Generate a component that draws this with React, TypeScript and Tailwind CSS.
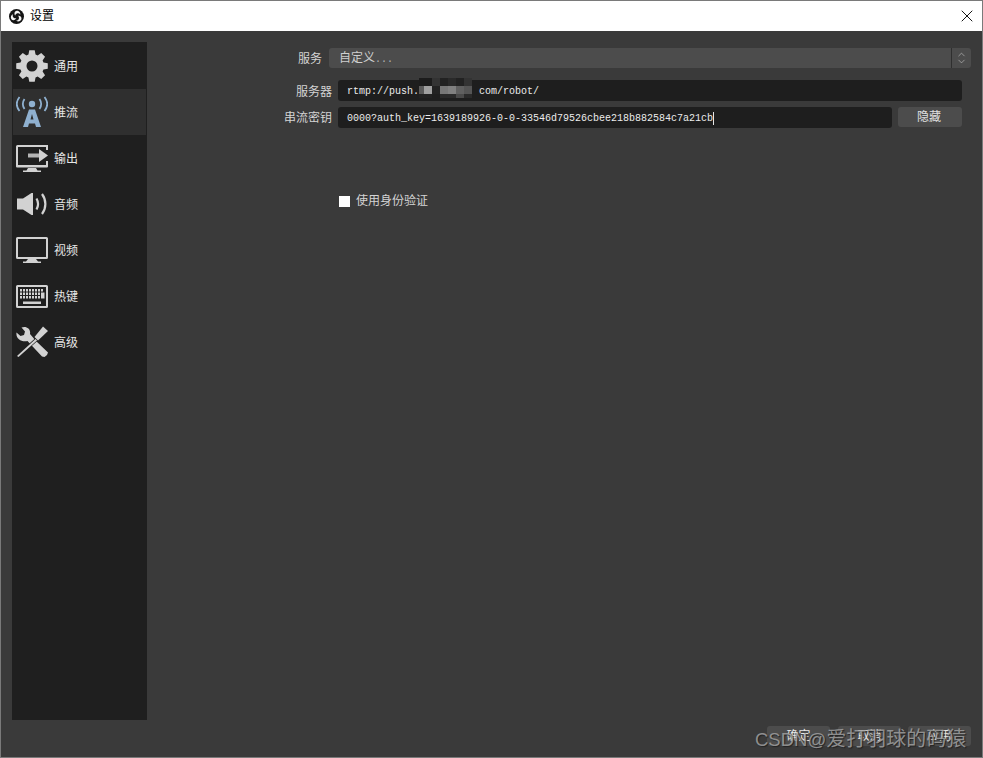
import { ReactNode } from 'react'
import { ChevronDown, ChevronUp, X } from 'lucide-react'

const cjk = "font-['Liberation_Sans','Noto_Sans_CJK_SC',sans-serif]"
const mono = "font-['Liberation_Mono','Noto_Sans_CJK_SC',monospace]"

const ICON = '#d2d2d2'
const STREAM = '#8fb0cf'

// eight teeth, walked round the wheel
const gearPath = () => {
  const pts: string[] = []
  for (let i = 0; i < 8; i++) {
    const a = (i * Math.PI) / 4
    const at = (r: number, d: number) => {
      const t = a + d - Math.PI / 2
      return `${(16 + r * Math.cos(t)).toFixed(2)} ${(16 + r * Math.sin(t)).toFixed(2)}`
    }
    pts.push(at(12, -0.3), at(16, -0.17), at(16, 0.17), at(12, 0.3))
  }
  return `M${pts.join('L')}ZM16 10.500a5.500 5.500 0 1 0 0 11 5.500 5.500 0 0 0 0-11z`
}

const GearIcon = () => (
  <svg width="32" height="32" viewBox="0 0 32 32">
    <path fill={ICON} fillRule="evenodd" d={gearPath()} />
  </svg>
)

const AntennaIcon = () => (
  <svg width="32" height="32" viewBox="0 0 32 32" fill="none" stroke={STREAM}>
    <circle cx="16" cy="8" r="3.200" fill={STREAM} stroke="none" />
    <path strokeWidth="1.800" d="M8.500 3C6.500 6 6.500 10 8.500 13M23.500 3C25.500 6 25.500 10 23.500 13" />
    <path strokeWidth="1.800" d="M3.500 1C0 5.500 0 10.500 3.500 15M28.500 1C32 5.500 32 10.500 28.500 15" />
    <path
      fill={STREAM}
      stroke="none"
      fillRule="evenodd"
      d="M13 13.500h6L25 31h-5l-1-3.500h-6L12 31H7zM14.500 23.500h3L16 18z"
    />
  </svg>
)

const OutputIcon = () => (
  <svg width="32" height="27" viewBox="0 0 32 27">
    <path
      fill={ICON}
      d="M1.500 0H32v5h-2V2H2v18h28v-4h2v5.500a1 1 0 0 1-1 1H1a1 1 0 0 1-1-1V1.500A1.500 1.500 0 0 1 1.500 0zM12 23h8l1.500 2.500H25V27H7v-1.500h3.500z"
    />
    <path fill="#b4b4b4" d="M12 8.500h11v4H12z" />
    <path fill={ICON} d="M23 4l9 6.500-9 6.500z" />
  </svg>
)

const AudioIcon = () => (
  <svg width="32" height="22" viewBox="0 0 32 22" fill="none" stroke={ICON}>
    <path fill={ICON} stroke="none" d="M1 5.500h6L15.500 0H17v22h-1.500L7 16.500H1z" />
    <path strokeWidth="2.200" d="M20.500 5.500c2 3.500 2 7.500 0 11" />
    <path strokeWidth="2.200" d="M26 1c4.500 6 4.500 14 0 20" />
  </svg>
)

const MonitorIcon = () => (
  <svg width="32" height="26" viewBox="0 0 32 26">
    <path
      fill={ICON}
      fillRule="evenodd"
      d="M1.500 0h29A1.500 1.500 0 0 1 32 1.500v19a1.500 1.500 0 0 1-1.500 1.500h-29A1.500 1.500 0 0 1 0 20.500v-19A1.500 1.500 0 0 1 1.500 0zM2 2v18h28V2zM12 22h8l2 2.500h3V26H7v-1.500h3z"
    />
  </svg>
)

const KeyboardIcon = () => {
  const rows = [
    [4, 7, 10, 13, 16, 19, 22, 25],
    [4, 7, 10, 13, 16, 19, 22],
    [4, 7, 10, 13, 16, 19, 22],
  ]
  return (
    <svg width="32" height="23" viewBox="0 0 32 23">
      <path
        fill={ICON}
        fillRule="evenodd"
        d="M1.500 0h29A1.500 1.500 0 0 1 32 1.500v20a1.500 1.500 0 0 1-1.500 1.500h-29A1.500 1.500 0 0 1 0 21.500v-20A1.500 1.500 0 0 1 1.500 0zM2 2v19h28V2z"
      />
      {rows.map((row, i) =>
        row.map((x) => (
          <rect key={`${i}-${x}`} x={x} y={4 + i * 3.500} width="2" height="2.500" fill={ICON} />
        ))
      )}
      <rect x="25" y="7.500" width="3.500" height="6" fill={ICON} />
      <rect x="7" y="16.500" width="18" height="2.500" fill={ICON} />
    </svg>
  )
}

const ToolsIcon = () => (
  <svg width="32" height="32" viewBox="0 0 32 32">
    <path
      fill={ICON}
      d="M0.500 6.500L4.500 10 8 9l1-3.500L5.500 1.500C10 -.5 15 2.500 14 8l6 7 12 11.500-1 2.500-2.500 2-2.500-.5L11.500 15C6 16.500 -.5 13 .5 6.500z"
    />
    <path fill="none" stroke="#1f1f1f" strokeWidth="3.500" d="M21 13L1 31" />
    <path fill={ICON} d="M27 0.500L32 5 22 14.500 18.500 11z" />
    <path fill={ICON} d="M19.500 13l1.500 1.500L2.500 31 1 30z" />
  </svg>
)

const OBSLogo = () => (
  <svg width="15" height="15" viewBox="0 0 30 30">
    <circle cx="15" cy="15" r="15" fill="#141414" />
    {[0, 120, 240].map((deg) => (
      <path
        key={deg}
        transform={`rotate(${deg} 15 15)`}
        fill="#f4f4f4"
        d="M15.500 3.500C20 3.500 23.500 7 22.500 11.500 21 8.800 18 8 15.500 9c-2 1-3 2.800-3 4.200C10 10 10.500 4.500 15.500 3.500z"
      />
    ))}
  </svg>
)

const navItems: { label: string; icon: ReactNode; active?: boolean }[] = [
  { label: '通用', icon: <GearIcon /> },
  { label: '推流', icon: <AntennaIcon />, active: true },
  { label: '输出', icon: <OutputIcon /> },
  { label: '音频', icon: <AudioIcon /> },
  { label: '视频', icon: <MonitorIcon /> },
  { label: '热键', icon: <KeyboardIcon /> },
  { label: '高级', icon: <ToolsIcon /> },
]

const FooterButton = ({ label, className }: { label: string; className: string }) => (
  <button className={`h-5 w-[63px] rounded-[3px] bg-[#4c4c4c] text-xs text-[#e8e8e8] ${className}`}>
    {label}
  </button>
)

// the pixelated patch that hides the host name, row by row
const mosaicCells = [
  'bg-[#1c1c1c]', 'bg-[#1c1c1c]', 'bg-[#333333]', 'bg-[#222222]', 'bg-[#2a2a2a]', 'bg-[#222222]', 'bg-[#333333]',
  'bg-[#5a5a5a]', 'bg-[#a0a0a0]', 'bg-[#222222]', 'bg-[#777777]', 'bg-[#808080]', 'bg-[#606060]', 'bg-[#555555]',
  'bg-[#222222]', 'bg-[#222222]', 'bg-[#1e1e1e]', 'bg-[#2a2a2a]', 'bg-[#2a2a2a]', 'bg-[#4a4a4a]', 'bg-[#2a2a2a]',
]

export default function App() {
  return (
    <div
      className={`relative flex h-[758px] w-[983px] flex-col overflow-hidden border border-[#7a7a7a] bg-[#3a3a3a] ${cjk}`}
    >
      <div className="flex h-[30px] shrink-0 items-center bg-white pl-2 pr-[5px]">
        <OBSLogo />
        <span className="ml-[6px] text-xs text-black">设置</span>
        <X className="ml-auto size-5 text-black" strokeWidth={1.100} />
      </div>

      <div className="flex min-h-0 flex-1 flex-col p-[11px]">
        <div className="flex min-h-0 flex-1">
          <nav className="flex w-[135px] shrink-0 flex-col bg-[#1f1f1f] px-px pt-px">
            {navItems.map((item) => (
              <div
                key={item.label}
                className={`flex h-[46px] shrink-0 items-center ${item.active ? 'bg-[#2f2f2f]' : ''}`}
              >
                <div className="ml-[3px] flex w-8 justify-center">{item.icon}</div>
                <span className="ml-[6px] pt-[2px] text-xs text-[#e6e6e6]">{item.label}</span>
              </div>
            ))}
          </nav>

          <div className="flex min-w-0 flex-1 flex-col pt-[6px]">
            <div className="flex items-center">
              <label className="w-[175px] pt-[2px] text-right text-xs text-[#d4d4d4]">服务</label>
              <div className="ml-[7px] flex h-5 flex-1 items-center overflow-hidden rounded-[3px] bg-[#4c4c4c]">
                <span className="flex-1 pl-[10px] text-xs text-[#cfcfcf]">
                  自定义<span className={`${mono} text-[10px] text-[#b4b4b4]`}>...</span>
                </span>
                <div className="flex h-full w-[20px] flex-col items-center justify-center border-l border-[#2f2f2f]">
                  <ChevronUp className="-mb-1 size-[11px] text-[#c8c8c8]" strokeWidth={1.300} />
                  <ChevronDown className="size-[11px] text-[#c8c8c8]" strokeWidth={1.300} />
                </div>
              </div>
            </div>

            <div className="mt-3 flex items-center pr-[9px]">
              <label className="w-[185px] pt-[2px] text-right text-xs text-[#d4d4d4]">服务器</label>
              <div
                className={`relative ml-[6px] flex h-[21px] flex-1 items-center rounded-[3px] bg-[#1e1e1e] pl-[9px] pt-px text-[10px] text-[#ececec] ${mono}`}
              >
                rtmp://push.
                <span className="ml-[60px]">com/robot/</span>
                <div className="absolute left-[81px] top-[-2px] grid grid-cols-[5px_8px_8px_8px_8px_8px_8px] grid-rows-[8px_8px_4px]">
                  {mosaicCells.map((cell, i) => (
                    <i key={i} className={cell} />
                  ))}
                </div>
              </div>
            </div>

            <div className="mt-[6px] flex items-start pr-[9px]">
              <label className="w-[185px] self-center pt-px text-right text-xs text-[#d4d4d4]">串流密钥</label>
              <div
                className={`ml-[6px] flex h-[21px] flex-1 items-center rounded-[3px] bg-[#1e1e1e] pl-[9px] pt-px text-[10px] text-[#ececec] ${mono}`}
              >
                0000?auth_key=1639189926-0-0-33546d79526cbee218b882584c7a21cb
                <span className="h-[13px] w-px bg-[#e6e6e6]" />
              </div>
              <button className="ml-[6px] h-5 w-16 rounded-[3px] bg-[#4c4c4c] pr-[2px] text-xs text-[#e0e0e0]">
                隐藏
              </button>
            </div>

            <div className="ml-[192px] mt-[65px] flex items-center">
              <span className="size-[11px] bg-white" />
              <span className="ml-[6px] text-xs text-[#d4d4d4]">使用身份验证</span>
            </div>
          </div>
        </div>

        <div className="mt-[6px] flex shrink-0 justify-end">
          <FooterButton label="确定" className="" />
          <FooterButton label="取消" className="ml-2" />
          <FooterButton label="应用" className="ml-[7px]" />
        </div>
      </div>

      <div className="absolute left-[754px] top-[725px] whitespace-nowrap text-[20px] leading-[26px] text-[#a8a8a8]/80 [text-shadow:1px_1px_1px_#222]">
        <span className="text-[18.500px]">CSDN@</span>爱打羽球的码猿
      </div>
    </div>
  )
}
